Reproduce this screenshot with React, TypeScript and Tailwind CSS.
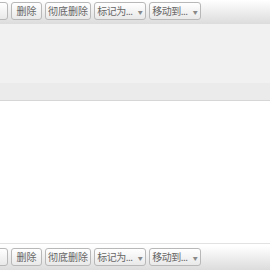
import { ReactNode } from 'react'

function Btn({ children, w, arrow }: { children?: ReactNode; w: string; arrow?: boolean }) {
  return (
    <button
      className={`flex h-[18px] ${w} shrink-0 items-center justify-center gap-[5px] whitespace-nowrap rounded-[3px] border border-[#b8b8b8] bg-gradient-to-b from-white to-[#e9e9e9] px-0 text-[10px] leading-none text-[#666]`}
    >
      {children}
      {arrow && <span className="text-[5px] text-[#888]">▼</span>}
    </button>
  )
}

function Toolbar() {
  return (
    <div className="flex h-[24px] items-start gap-[3px] bg-gradient-to-b from-white to-[#dcdcdc] pt-[2px]">
      <div className="-ml-[22px] w-[30px]">
        <Btn w="w-[30px]" arrow />
      </div>
      <Btn w="w-[31px]">删除</Btn>
      <Btn w="w-[46px]">彻底删除</Btn>
      <Btn w="w-[52px]" arrow>
        <span className="tracking-[-0.5px]">标记为...</span>
      </Btn>
      <Btn w="w-[52px]" arrow>
        <span className="tracking-[-0.5px]">移动到...</span>
      </Btn>
    </div>
  )
}

export default function App() {
  return (
    <div
      className="flex h-[270px] w-[270px] flex-col overflow-hidden bg-white"
      style={{ fontFamily: '"Noto Sans CJK SC", "Liberation Sans", sans-serif' }}
    >
      <Toolbar />
      <div className="h-[59px] bg-[#f1f1f1]" />
      <div className="h-[18px] border-b border-[#d6d6d6] bg-[#ebebeb]" />
      <div className="flex-1 bg-white" />
      <div className="border-t border-[#e2e2e2] pt-[2px]">
        <Toolbar />
      </div>
    </div>
  )
}
